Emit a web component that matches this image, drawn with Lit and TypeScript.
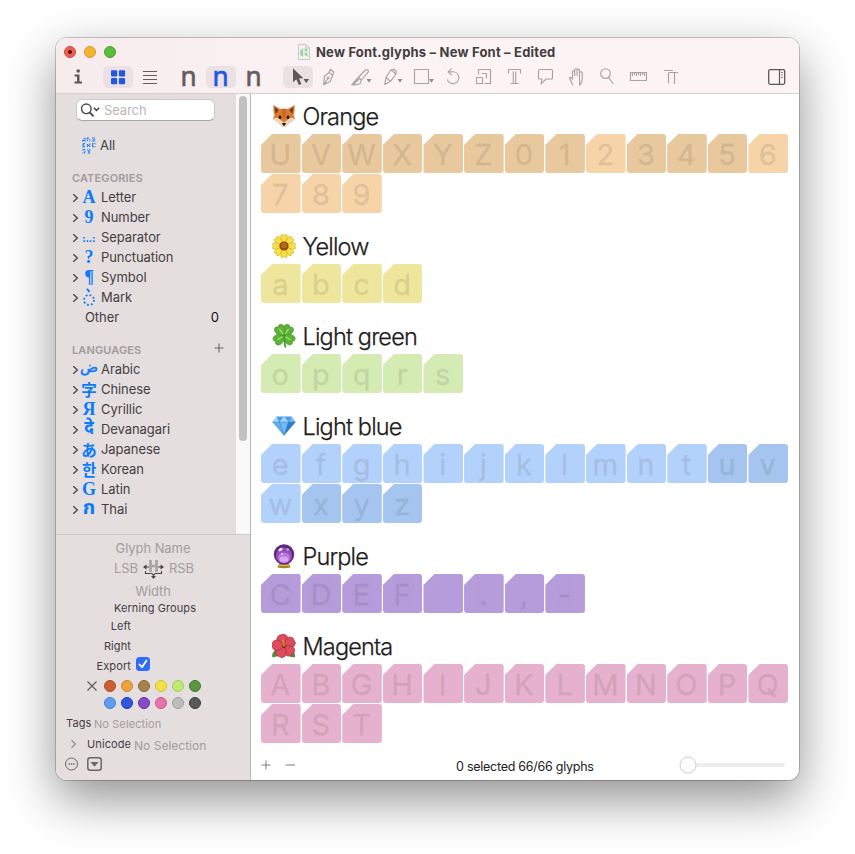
import { LitElement, html, svg, css } from "lit";
import { customElement } from "lit/decorators.js";

type Group = { name: string; tone: string; deep: string; glyphs: string; deepGlyphs: string; emoji: unknown };

const fox = svg`
  <path d="M1.500 1 L8 5 Q12 3.800 16 5 L22.500 1 Q23 8 21.500 11 L23.300 15 Q18 17.500 15 21.500 Q12 24 9 21.500 Q6 17.500 0.700 15 L2.500 11 Q1 8 1.500 1Z" fill="#d97a30"/>
  <path d="M2.600 3 L6.500 6 L3.800 10Z M21.400 3 L17.500 6 L20.200 10Z" fill="#6d3920"/>
  <path d="M0.700 15 Q6 12 9 16.500 L12 18 L15 16.500 Q18 12 23.300 15 Q18 17.500 15 21.500 Q12 24 9 21.500 Q6 17.500 0.700 15Z" fill="#ead6bc"/>
  <path d="M10 5 H14 L13.500 14 H10.500Z" fill="#bd5c1d" opacity=".6"/>
  <ellipse cx="8" cy="13.200" rx="1.300" ry="1.700" fill="#20150f"/><ellipse cx="16" cy="13.200" rx="1.300" ry="1.700" fill="#20150f"/>
  <path d="M9.800 19.500 Q12 18 14.200 19.500 L12 22.200Z" fill="#2a1d18"/>`;
const petals8 = [0, 45, 90, 135, 180, 225, 270, 315];
const daisy = svg`
  ${petals8.map((a) => svg`<path transform=${`rotate(${a} 12 12)`} d="M12 12 L8.700 3.500 Q8.300 .2 10.600 .3 L12 1.400 L13.400 .3 Q15.700 .2 15.300 3.500Z" fill="#f7e040" stroke="#b99a24" stroke-width=".45"/>`)}
  <circle cx="12" cy="12" r="4.600" fill="#8c4a0e"/><circle cx="12" cy="11.500" r="3" fill="#b56b16"/>`;
const clover = svg`
  <path d="M12 12 Q12 18 13.500 23.500" stroke="#3f8c24" stroke-width="1.600" fill="none"/>
  ${[35, 125, 235, 325].map((a) => svg`<path transform=${`rotate(${a} 12 11.500)`} d="M12 11.500 C6 8 5.500 2 8.500 .3 Q11 -.8 12 1.500 Q13.500 -1 15.700 .5 C18.500 3 17.500 8 12 11.500Z" fill="#5db337" stroke="#3b8d22" stroke-width=".5"/><path transform=${`rotate(${a} 12 11.500)`} d="M12 9.500 V3.500" stroke="#a5dd76" stroke-width="1.200"/>`)}`;
const gem = svg`
  <path d="M5 2.500 H19 L23.500 8 L12 21.500 L.5 8Z" fill="#4b9fe8"/>
  <path d="M5 2.500 L7.500 8 H.5Z M12 2.500 L16.500 8 H7.500Z" fill="#a5d7fb"/>
  <path d="M19 2.500 L23.500 8 H16.500Z M7.500 8 H16.500 L12 21.500Z" fill="#70b9f3"/>
  <path d="M.5 8 H7.500 L12 21.500Z" fill="#62aef0"/><path d="M16.500 8 H23.500 L12 21.500Z" fill="#2f7ccc"/>
  <path d="M.5 8 H23.500 M5 2.500 L7.500 8 L12 21.500 L16.500 8 L19 2.500" stroke="#3f85c8" stroke-width=".5" fill="none"/>`;
const orb = svg`
  <path d="M5.500 23.500 L7 19.500 H17 L18.500 23.500 Q12 25 5.500 23.500Z" fill="#a58423"/>
  <path d="M7 21.300 H17" stroke="#e7cf62" stroke-width="1"/>
  <circle cx="12" cy="10.500" r="10.200" fill="#5c2a80"/><circle cx="12" cy="11.500" r="8" fill="#9450bd"/>
  <ellipse cx="12" cy="13.500" rx="6" ry="5" fill="#b977da"/><ellipse cx="12" cy="15.500" rx="4.500" ry="3" fill="#d9a3ee"/>
  <ellipse cx="8.500" cy="5.500" rx="2.300" ry="1.300" transform="rotate(-30 8.500 5.500)" fill="#f4e3fb"/><circle cx="15.800" cy="5.500" r="1.100" fill="#e3bff2"/><circle cx="10" cy="10" r="1" fill="#eed5f8"/>`;
const hibiscus = svg`
  <path d="M.3 23 Q-.5 18 4 16 L8 20 Q5 24 .3 23Z M23 23 Q23.800 18 19 16 L16 21 Q19 24 23 23Z" fill="#4f8f32"/>
  ${[-12, 60, 132, 204, 276].map((a) => svg`<path transform=${`rotate(${a} 12 12)`} d="M12 12 Q6 7.500 6.800 3 Q9 -.8 12 .5 Q15.500 -.8 17.300 3.500 Q18 8 12 12Z" fill="#dc4c5c" stroke="#a52737" stroke-width=".6"/>`)}
  <circle cx="12" cy="12" r="2" fill="#8e1c2c"/><path d="M12 11.500 L11 7" stroke="#c9812f" stroke-width="2.400" stroke-linecap="round"/>`;

const groups: Group[] = [
  { name: "Orange", tone: "#f7d4a8", deep: "#e9c89e", glyphs: "UVWXYZ0123456789", deepGlyphs: "UVWXYZ01345", emoji: fox },
  { name: "Yellow", tone: "#eee69c", deep: "#eee69c", glyphs: "abcd", deepGlyphs: "", emoji: daisy },
  { name: "Light green", tone: "#d4ebb3", deep: "#d4ebb3", glyphs: "opqrs", deepGlyphs: "", emoji: clover },
  { name: "Light blue", tone: "#b2d2fc", deep: "#a5c5f0", glyphs: "efghijklmntuvwxyz", deepGlyphs: "uvxyz", emoji: gem },
  { name: "Purple", tone: "#b69cdb", deep: "#b69cdb", glyphs: "CDEF .,-", deepGlyphs: "", emoji: orb },
  { name: "Magenta", tone: "#e6b1ce", deep: "#e6b1ce", glyphs: "ABGHIJKLMNOPQRST", deepGlyphs: "", emoji: hibiscus },
];

// Tool drawings share one coordinate space; each is clipped to its own 31px slot.
const caret = (x: number) => svg`<path d=${`M${x} 79 h5 l-2.500 3.700z`} fill="#938b8c" stroke="none"/>`;
const tools = [
  svg`<path d="M323.700 84.800 L324.300 76.500 L329 72.500 L332.700 75.200 L330.200 81.500Z M329 72.500 L330.300 69.300 L333.700 72 L332.700 75.200 M323.700 84.800 L327.600 78.600"/><circle cx="328.200" cy="77.800" r=".8"/>`,
  svg`<path d="M351.800 84.700 L358.200 77.500 L365.500 70 Q368.800 68.600 368.300 71.800 L361.500 80 L360 83.800 Q356 85.200 351.800 84.700Z M358.200 77.500 L361.500 80 M354 84 L359 79"/>${caret(366.5)}`,
  svg`<path d="M384.800 84.500 L386 77.500 L391 69.800 L393.500 69.300 L396.500 71.500 L396 74 L390.500 81.300Z M386 77.500 L390.500 81.300 M391 69.800 L396 74"/>${caret(397.5)}`,
  svg`<path d="M414.500 69.500 H428.500 V83.500 H414.500Z"/>${caret(429)}`,
  svg`<path d="M447.300 79.500 A5.900 5.900 0 1 0 452.700 71.800 H448.500 M451.700 68.300 L448.200 71.800 L451.700 75.300"/>`,
  svg`<path d="M478.500 74.500 V69.500 H490.500 V83.500 H484.500 M476.500 77.500 H482.500 V83.500 H476.500Z M481.500 73.500 H486.500 V78.500"/>`,
  svg`<path d="M508.500 73.500 V69.500 H520.500 V73.500 M513.300 71.500 V83.500 M515.700 71.500 V83.500 M510.500 83.500 H518.500"/>`,
  svg`<path d="M539.500 69.500 H551.500 Q552.500 69.500 552.500 70.500 V78 Q552.500 79 551.500 79 H546 L541 83.800 L542 79 H539.500 Q538.500 79 538.500 78 V70.500 Q538.500 69.500 539.500 69.500Z"/>`,
  svg`<path d="M573 85.200 Q571 82 569.400 77.800 Q570.500 76.300 572.500 79.200 V71.500 Q573.600 70 574.700 71.500 V76 M574.700 76 V69.500 Q575.900 68 577.100 69.500 V76 M577.100 76 V69.800 Q578.300 68.500 579.500 69.800 V76.500 M579.500 76.500 V72.500 Q581 71 582.300 72.500 V79 Q582 83 579.700 85.200Z"/>`,
  svg`<circle cx="605.500" cy="73.600" r="4.800"/><path d="M608.500 77.500 L613.300 84"/>`,
  svg`<path d="M630.500 72.500 H646.500 V80.500 H630.500Z M632.500 73 V76 M634.500 73 V75 M636.500 73 V76 M638.500 73 V75 M640.500 73 V76 M642.500 73 V75 M644.500 73 V76"/>`,
  svg`<path d="M664 70.500 H673 M668.500 73 V83.500 M668.500 72.500 H678 M674.500 72.500 V84"/>`,
];

const categories = [["A", "Letter", "serif"], ["9", "Number", "serif"], ["sep", "Separator", ""], ["?", "Punctuation", "serif"], ["¶", "Symbol", "serif"], ["mark", "Mark", ""]];
const languages = [["ض", "Arabic", "arabic"], ["字", "Chinese", "cjk"], ["Я", "Cyrillic", "serif"], ["दे", "Devanagari", "indic"], ["あ", "Japanese", "cjk"], ["한", "Korean", "cjk"], ["G", "Latin", "serif"], ["ก", "Thai", "thai"]];
const swatches = [
  [["#ca5f33", "#b54a1f"], ["#eaa23f", "#cf852b"], ["#a6824b", "#876531"], ["#f2e049", "#d3c02f"], ["#bfea74", "#9fcc58"], ["#5b9641", "#3e7728"]],
  [["#609df2", "#417fd6"], ["#3157da", "#163bb9"], ["#844bc6", "#662daa"], ["#e673a9", "#c9558c"], ["#bebdbe", "#a09fa0"], ["#595959", "#3b3b3b"]],
];

@customElement("app-root")
export class AppRoot extends LitElement {
  static styles = css`
    :host { display: block; box-sizing: border-box; height: 854px; padding: 38px 56px 0; background: #fff; overflow: hidden; font-family: Inter, "Liberation Sans", sans-serif; font-size: 13px; color: #444041; }
    * { box-sizing: border-box; }
    svg { display: block; fill: none; flex: none; }
    .window { width: 743px; height: 742px; border-radius: 11px; overflow: hidden; background: #fff; display: flex; flex-direction: column; }
    .shadow { width: 743px; border-radius: 11px; box-shadow: 0 0 0 1px rgba(0,0,0,.2), 0 19px 50px rgba(0,0,0,.44); }
    .bar { height: 56px; flex: none; background: linear-gradient(90deg, #f6ecee, #fcf3f4 45%); border-bottom: 1px solid #d5cdce; }
    .title { height: 27px; display: flex; align-items: center; padding-left: 8px; }
    .light { width: 12px; height: 12px; border-radius: 50%; margin-right: 8px; display: grid; place-items: center; border: 1px solid; }
    .red { background: #ec5f54; border-color: #d04b41; } .amber { background: #f2b431; border-color: #d69a23; } .green { background: #5dbb3f; border-color: #48a02e; }
    .red i { width: 4px; height: 4px; border-radius: 50%; background: #5d0d08; }
    .doc { margin: 0 6px 0 174px; }
    .title b { font-weight: 700; letter-spacing: .2px; color: #413d3e; white-space: nowrap; }
    .tools { display: flex; height: 24px; align-items: center; padding-left: 7px; }
    .btn { width: 30px; height: 22px; border-radius: 5px; display: grid; place-items: center; }
    .on { background: #ebe1e3; }
    .n { font: 400 28px/22px "Noto Sans", sans-serif; color: #655b5c; -webkit-text-stroke: .7px currentColor; }
    .n span { display: block; height: 22px; line-height: 19px; transform: scaleX(.93); }
    .n.blue { color: #2057e4; }
    .body { flex: 1; display: flex; min-height: 0; }
    .side { width: 195px; background: #e4dedf; border-right: 1px solid #bab5b6; display: flex; flex-direction: column; }
    .upper { height: 441px; display: flex; border-bottom: 1px solid #cfc9ca; }
    .nav { width: 180px; }
    .track { width: 14px; background: #f9f9f9; padding: 2px 3px; }
    .thumb { width: 8px; height: 345px; border-radius: 4px; background: #c1c1c1; }
    .search { margin: 5px 0 0 20px; width: 139px; height: 22px; border-radius: 6px; background: #fff; border: 1px solid #cdc7c8; border-bottom-color: #aaa5a6; display: flex; align-items: center; color: #bab8b9; padding-left: 4px; gap: 4px; letter-spacing: -.1px; }
    .all { display: flex; align-items: center; height: 20px; margin-top: 14px; padding-left: 26px; gap: 4px; }
    .head { height: 20px; line-height: 20px; font-size: 11px; font-weight: 600; color: #a19b9c; padding: 0 12px 0 16px; display: flex; justify-content: space-between; letter-spacing: .12px; }
    .cat { margin-top: 13px; } .lang { margin-top: 13px; }
    .cat + .row, .lang + .row { margin-top: -1px; }
    .row { height: 20px; display: flex; align-items: center; letter-spacing: -.07px; }
    .chev { margin-left: 16px; width: 7px; margin-top: 1px; }
    .ico { width: 20px; height: 20px; display: grid; place-items: center; color: #0a7aff; margin-right: 2px; }
    .ico span { display: block; line-height: 20px; white-space: nowrap; }
    .serif { font-family: "Liberation Serif", serif; font-weight: 700; font-size: 18px; }
    .cjk { font-family: "Noto Sans CJK JP", "Noto Sans CJK KR", sans-serif; font-weight: 700; font-size: 15.5px; margin-top: -1px; }
    .arabic { font-family: "DejaVu Sans", sans-serif; font-size: 15px; font-weight: 400; -webkit-text-stroke: .4px currentColor; margin-top: -5px; }
    .indic { font-family: "Noto Sans Devanagari", "Noto Sans", sans-serif; font-weight: 700; font-size: 17px; }
    .thai { font-family: "Noto Sans Thai", "Noto Sans", sans-serif; font-weight: 700; font-size: 20px; margin-top: -2px; }
    .other { padding: 0 17px 0 29px; justify-content: space-between; } .other b { font-weight: 400; color: #111; }
    .info { flex: 1; display: flex; flex-direction: column; }
    .ph { color: #a39d9e; }
    .line { display: flex; align-items: center; justify-content: center; letter-spacing: -.07px; }
    .k { font-size: 11px; letter-spacing: .1px; }
    .right { width: 75px; text-align: right; }
    .check { margin-left: 5px; width: 14px; height: 14px; border-radius: 3.5px; background: #2f6df6; margin-top: -4px; }
    .dots { display: flex; gap: 5px; height: 17px; align-items: center; padding-left: 48px; }
    .dot { width: 12px; height: 12px; border-radius: 50%; border: 1px solid; }
    .pane { flex: 1; display: flex; flex-direction: column; padding-left: 10px; }
    .scroll { height: 657px; }
    .group { margin-bottom: 17px; }
    .group h2 { margin: 0; height: 34px; display: flex; align-items: center; padding: 0 0 2px 11px; gap: 6.5px; font-size: 23.5px; font-weight: 300; letter-spacing: -.84px; color: #1c1c1c; -webkit-text-stroke: .25px #1c1c1c; }
    .cells { display: grid; grid-template-columns: repeat(13, 1fr); gap: 1px; width: 527px; grid-auto-rows: 39px; }
    .group:first-child { margin-top: 6px; }
    .cell { border-radius: 3px; clip-path: polygon(11px 0, 100% 0, 100% 100%, 0 100%, 0 11px); font-size: 29px; line-height: 40px; text-align: center; }
    .cell span { display: block; color: #46403c; opacity: .13; -webkit-text-stroke: .3px #46403c; transform: translate(-.5px, .6px); }
    .foot { height: 28px; display: flex; align-items: center; color: #222; }
    .count { margin-left: 160px; width: 150px; font-size: 12.5px; letter-spacing: -.26px; white-space: nowrap; margin-top: 2px; }
    .slider { margin-left: 72.5px; }
  `;

  chev() {
    return html`<svg class="chev" width="7" height="10" viewBox="0 0 7 10"><path d="M1.300 1.200 L5.300 5 L1.300 8.800" stroke="#555051" stroke-width="1.500"/></svg>`;
  }

  icon(kind: string, face: string) {
    if (kind === "sep") return html`<svg width="12" height="12" viewBox="0 0 12 12"><path d="M.3 6h1.600v1.600H.3zM10.100 6h1.600v1.600H10.100zM.3 9.300h1.600v1.600H.3zM3.600 9.300h1.600v1.600H3.600zM6.700 9.300h1.600v1.600H6.700zM10.100 9.300h1.600v1.600H10.100z" fill="#0a7aff"/></svg>`;
    if (kind === "mark") return html`<svg width="14" height="19" viewBox="0 0 14 19"><circle cx="7" cy="12" r="5" stroke="#0a7aff" stroke-width="1.800" stroke-dasharray="1.800 2.125"/><path d="M5 .8 L7.500 3.800" stroke="#0a7aff" stroke-width="2"/></svg>`;
    return html`<span class=${face}>${kind}</span>`;
  }

  list(items: string[][]) {
    return items.map(([k, label, face]) => html`<div class="row">${this.chev()}<div class="ico">${this.icon(k, face)}</div>${label}</div>`);
  }

  render() {
    return html`<div class="shadow"><div class="window">
      <div class="bar">
        <div class="title">
          <span class="light red"><i></i></span><span class="light amber"></span><span class="light green"></span>
          <svg class="doc" width="12" height="16" viewBox="0 0 12 16"><path d="M.5 .5 H8 L11.500 4 V15.500 H.5Z" fill="#f3f3f1" stroke="#c9c7c5"/><path d="M8 .5 V4 H11.500" stroke="#c9c7c5"/><path d="M5.200 4.500 V12.500 Q1.500 12 2 8.500 Q2 5 5.200 4.500Z M6.500 4.500 H9.500 V7.500 H6.500Z M6.500 8.800 H9.500 V12.500 L6.500 11Z" fill="#9fd2a5"/></svg>
          <b>New Font.glyphs – New Font – Edited</b>
        </div>
        <div class="tools">
          <div class="btn"><svg width="10" height="16" viewBox="0 0 10 16"><circle cx="5.200" cy="2" r="1.800" fill="#5f5657"/><path d="M1.500 5.500 H6.500 V12.500 H9 V14.500 H1.500 V12.500 H4 V7.500 H1.500Z" fill="#5f5657"/></svg></div>
          <div class="btn on" style="margin-left:10px"><svg width="15" height="15" viewBox="0 0 15 15"><g fill="#2057e4"><rect x="0" y=".3" width="6.200" height="6.200" rx="1"/><rect x="7.900" y=".3" width="6.200" height="6.200" rx="1"/><rect x="0" y="8.100" width="6.200" height="6.200" rx="1"/><rect x="7.900" y="8.100" width="6.200" height="6.200" rx="1"/></g></svg></div>
          <div class="btn" style="margin-left:2px"><svg width="15" height="14" viewBox="0 0 15 14"><path d="M0 1.500H14M0 5.500H14M0 9.500H14M0 13.500H14" stroke="#655b5c"/></svg></div>
          <div class="btn n" style="margin-left:9px"><span>n</span></div>
          <div class="btn n on blue" style="margin-left:2px"><span>n</span></div>
          <div class="btn n" style="margin-left:3px"><span>n</span></div>
          <div class="btn on" style="margin-left:14px"><svg width="30" height="22" viewBox="283 66 30 22"><path d="M293 68.300 V82.300 L296.300 79.300 L298.900 85 L301.400 83.900 L299 78.500 L303.300 78.300Z" fill="#5f5657"/><path d="M303.500 79 h5.500 l-2.700 4z" fill="#5f5657"/></svg></div>
          ${tools.map((t, k) => html`<svg width="31" height="22" viewBox=${`${313 + 31 * k} 66 31 22`} stroke="#aaa1a2" stroke-width="1.150" stroke-linejoin="round">${t}</svg>`)}
          <svg style="margin-left:83px" width="18" height="16" viewBox="768 69 18 16"><rect x="768.700" y="69.700" width="16" height="14.600" rx="1.500" stroke="#5f5657" stroke-width="1.300"/><path d="M779.500 70V84" stroke="#5f5657" stroke-width="1.200"/><path d="M781 72.500h2M781 75h2M781 77.500h2" stroke="#8d8586"/></svg>
        </div>
      </div>
      <div class="body">
        <div class="side">
          <div class="upper">
            <div class="nav">
              <div class="search"><svg width="19" height="14" viewBox="0 0 19 14"><circle cx="5.300" cy="5.800" r="4.800" stroke="#494546" stroke-width="1.400"/><path d="M8.700 9.300 L12.600 13.300" stroke="#494546" stroke-width="1.800"/><path d="M12.800 4.700 L15.500 7.400 L18.200 4.700" stroke="#494546" stroke-width="1.500"/></svg>Search</div>
              <div class="all"><svg width="14" height="17" viewBox="0 0 14 17"><path d="M.5 4.500V2.500M3 4.500V1M1.500 1.500H3M1 3.500H3M5.300 .5V4.500M5.300 1H7M7.700 2V4.500M10 1H13M12.500 2L10.500 4H13.500M3 6.500H1V10H3M1 8.300H2.500M5.500 10V7M7.700 10V6.500M5.500 8.500H7.700M13.500 6.800H10.500V9.800H13.500M3.300 12.500H1V14M3 14V16H.5M5.500 12.300L6.800 14.500M8.300 12.300L6.500 16H8.500" stroke="#0a7aff" stroke-width="1.100" stroke-dasharray="1.600 .4"/></svg>All</div>
              <div class="head cat">CATEGORIES</div>
              ${this.list(categories)}
              <div class="row other">Other<b>0</b></div>
              <div class="head lang">LANGUAGES<svg width="10" height="16" viewBox="0 0 10 16"><path d="M5 3.500V12.500M.5 8H9.500" stroke="#6c6667" stroke-width="1.100"/></svg></div>
              ${this.list(languages)}
            </div>
            <div class="track"><div class="thumb"></div></div>
          </div>
          <div class="info">
            <div class="line ph" style="height:20px;margin-top:3px">Glyph Name</div>
            <div class="line ph" style="height:20px;gap:5px;padding-left:2px">LSB<svg width="21" height="22" viewBox="0 0 21 22"><path d="M7.500 3V15M13.500 3V15M7.500 9H13.500" stroke="#aaa4a5" stroke-width="2.700"/><path d="M2 10H6M15 10H19M2.500 14V16.500H9L10.500 18.500L12 16.500H18.500V14M10.500 18V20" stroke="#494546" stroke-width="1.100"/><path d="M0 10L3.500 7.500V12.500ZM21 10L17.500 7.500V12.500ZM8 19L10.500 22L13 19Z" fill="#494546"/></svg>RSB</div>
            <div class="line ph" style="height:20px;margin-top:3px">Width</div>
            <div class="line k" style="height:16px;margin-top:-1px;padding-left:4px;letter-spacing:.08px">Kerning Groups</div>
            <div class="k right" style="height:20px;line-height:20px">Left</div>
            <div class="k right" style="height:20px;line-height:20px">Right</div>
            <div class="k" style="height:20px;display:flex;align-items:center"><span class="right">Export</span><svg class="check" viewBox="0 0 14 14"><path d="M3.500 7.500 L6 10.200 L10.500 3.500" stroke="#fff" stroke-width="1.800" stroke-linecap="round" stroke-linejoin="round"/></svg></div>
            <div class="dots" style="margin-top:1px;padding-left:31px"><svg width="10" height="10" viewBox="0 0 10 10" style="margin-right:2px"><path d="M.5 .5L9.500 9.500M9.500 .5L.5 9.500" stroke="#5d5758" stroke-width="1.100"/></svg>${swatches[0].map(([f, b]) => html`<span class="dot" style=${`background:${f};border-color:${b}`}></span>`)}</div>
            <div class="dots">${swatches[1].map(([f, b]) => html`<span class="dot" style=${`background:${f};border-color:${b}`}></span>`)}</div>
            <div class="k" style="height:20px;display:flex;align-items:center;margin-top:2px;padding-left:10px;gap:2.500px">Tags<span class="ph" style="margin-top:1px">No Selection</span></div>
            <div class="k" style="height:20px;display:flex;align-items:center;padding-left:14px;margin-top:1px"><svg width="7" height="10" viewBox="0 0 7 10" style="margin-right:10px"><path d="M1.500 1.200 L5.300 5 L1.500 8.800" stroke="#8b8586" stroke-width="1.200"/></svg>Unicode<span class="ph" style="margin:2px 0 0 3px;font-size:12px;letter-spacing:0">No Selection</span></div>
            <div style="display:flex;gap:8px;padding-left:8px;height:17px;margin-top:1.5px;align-items:center"><svg width="15" height="15" viewBox="0 0 15 15"><circle cx="7.500" cy="7" r="6" stroke="#6c6667"/><path d="M4.500 7h1.400M6.800 7h1.400M9.100 7h1.400" stroke="#6c6667" stroke-width="1.300"/></svg><svg width="15" height="14" viewBox="0 0 15 14"><rect x=".8" y=".8" width="13.400" height="12.400" rx="2.500" stroke="#6c6667" stroke-width="1.500"/><path d="M3.500 5H11.500L7.500 9.700Z" fill="#6c6667"/></svg></div>
          </div>
        </div>
        <div class="pane">
          <div class="scroll">
            ${groups.map((g) => html`<section class="group"><h2><svg width="24" height="25" viewBox="0 0 24 25">${g.emoji}</svg>${g.name}</h2>
              <div class="cells">${[...g.glyphs].map((c) => html`<div class="cell" style=${`background:${g.deepGlyphs.includes(c) ? g.deep : g.tone}`}><span>${c}</span></div>`)}</div></section>`)}
          </div>
          <div class="foot"><svg width="35" height="10" viewBox="0 0 35 10"><path d="M5 .5V9.500M.5 5H9.500M24.500 5H34" stroke="#7d7d7d"/></svg><span class="count">0 selected 66/66 glyphs</span>
            <svg class="slider" width="108" height="20" viewBox="0 0 108 20"><rect x="8" y="8" width="98" height="4" rx="2" fill="#ededed"/><circle cx="9" cy="10" r="8" fill="#fff" stroke="#cfcfcf"/></svg></div>
        </div>
      </div>
    </div></div>`;
  }
}
